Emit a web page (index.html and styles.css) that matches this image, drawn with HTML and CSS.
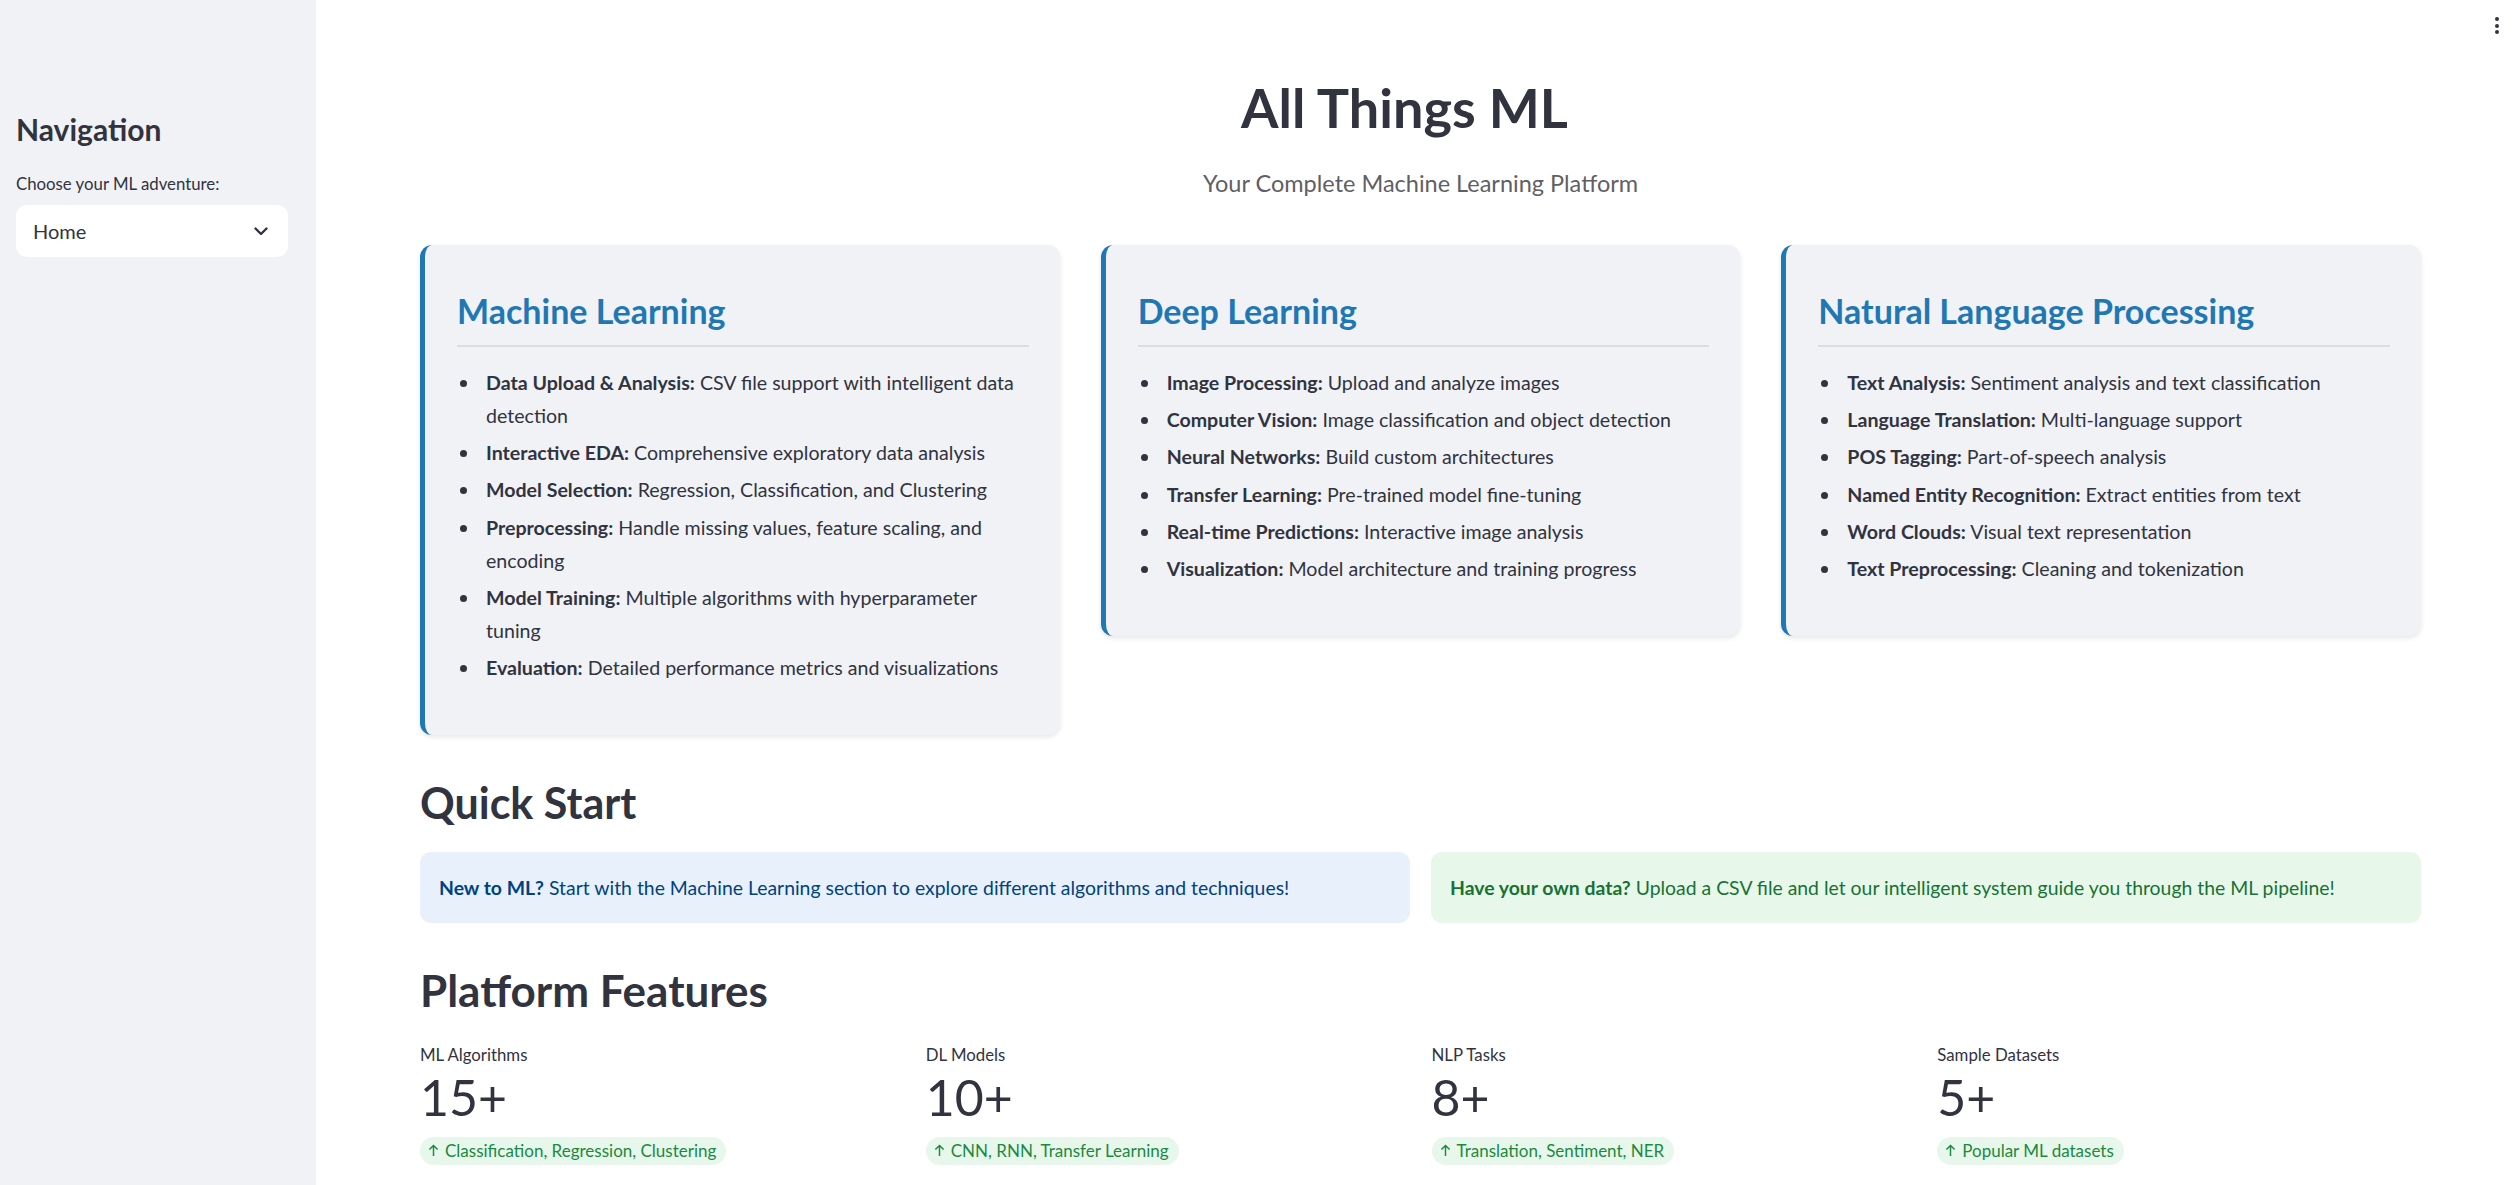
FILE: index.html
```html
<!DOCTYPE html>
<html lang="en">
<head>
<meta charset="utf-8">
<title>All Things ML</title>
<link rel="stylesheet" href="styles.css">
</head>
<body>
<div class="app">
  <aside class="sidebar">
    <h2 class="side-title">Navigation</h2>
    <div class="select-label">Choose your ML adventure:</div>
    <div class="select">
      <span>Home</span>
      <svg class="chevron" width="14" height="9" viewBox="0 0 14 9"><path d="M1.5 1.5 L7 7 L12.5 1.5" fill="none" stroke="#31333f" stroke-width="2.4" stroke-linecap="round" stroke-linejoin="round"/></svg>
    </div>
  </aside>
  <main class="main">
    <div class="menu-dots"><i></i><i></i><i></i></div>
    <div class="content">
      <h1 class="title">All Things ML</h1>
      <p class="subtitle">Your Complete Machine Learning Platform</p>

      <div class="cards">
        <div class="card">
          <h3 class="card-title">Machine Learning</h3>
          <ul class="card-list">
            <li><span><b>Data Upload &amp; Analysis:</b> CSV file support with intelligent data detection</span></li>
            <li><span><b>Interactive EDA:</b> Comprehensive exploratory data analysis</span></li>
            <li><span><b>Model Selection:</b> Regression, Classification, and Clustering</span></li>
            <li><span><b>Preprocessing:</b> Handle missing values, feature scaling, and encoding</span></li>
            <li><span><b>Model Training:</b> Multiple algorithms with hyperparameter tuning</span></li>
            <li><span><b>Evaluation:</b> Detailed performance metrics and visualizations</span></li>
          </ul>
        </div>
        <div class="card">
          <h3 class="card-title">Deep Learning</h3>
          <ul class="card-list">
            <li><span><b>Image Processing:</b> Upload and analyze images</span></li>
            <li><span><b>Computer Vision:</b> Image classification and object detection</span></li>
            <li><span><b>Neural Networks:</b> Build custom architectures</span></li>
            <li><span><b>Transfer Learning:</b> Pre-trained model fine-tuning</span></li>
            <li><span><b>Real-time Predictions:</b> Interactive image analysis</span></li>
            <li><span><b>Visualization:</b> Model architecture and training progress</span></li>
          </ul>
        </div>
        <div class="card">
          <h3 class="card-title">Natural Language Processing</h3>
          <ul class="card-list">
            <li><span><b>Text Analysis:</b> Sentiment analysis and text classification</span></li>
            <li><span><b>Language Translation:</b> Multi-language support</span></li>
            <li><span><b>POS Tagging:</b> Part-of-speech analysis</span></li>
            <li><span><b>Named Entity Recognition:</b> Extract entities from text</span></li>
            <li><span><b>Word Clouds:</b> Visual text representation</span></li>
            <li><span><b>Text Preprocessing:</b> Cleaning and tokenization</span></li>
          </ul>
        </div>
      </div>

      <h2 class="section section-qs">Quick Start</h2>
      <div class="alerts">
        <div class="alert info"><b>New to ML?</b> Start with the Machine Learning section to explore different algorithms and techniques!</div>
        <div class="alert success"><b>Have your own data?</b> Upload a CSV file and let our intelligent system guide you through the ML pipeline!</div>
      </div>

      <h2 class="section section-pf">Platform Features</h2>
      <div class="metrics">
        <div class="metric">
          <div class="metric-label">ML Algorithms</div>
          <div class="metric-value">15+</div>
          <div class="delta"><svg class="arrow" width="11" height="13" viewBox="0 0 12 14"><path d="M6 13 V1.8 M1.5 6 L6 1.5 L10.5 6" fill="none" stroke="currentColor" stroke-width="1.6"/></svg>Classification, Regression, Clustering</div>
        </div>
        <div class="metric">
          <div class="metric-label">DL Models</div>
          <div class="metric-value">10+</div>
          <div class="delta"><svg class="arrow" width="11" height="13" viewBox="0 0 12 14"><path d="M6 13 V1.8 M1.5 6 L6 1.5 L10.5 6" fill="none" stroke="currentColor" stroke-width="1.6"/></svg>CNN, RNN, Transfer Learning</div>
        </div>
        <div class="metric">
          <div class="metric-label">NLP Tasks</div>
          <div class="metric-value">8+</div>
          <div class="delta"><svg class="arrow" width="11" height="13" viewBox="0 0 12 14"><path d="M6 13 V1.8 M1.5 6 L6 1.5 L10.5 6" fill="none" stroke="currentColor" stroke-width="1.6"/></svg>Translation, Sentiment, NER</div>
        </div>
        <div class="metric">
          <div class="metric-label">Sample Datasets</div>
          <div class="metric-value">5+</div>
          <div class="delta"><svg class="arrow" width="11" height="13" viewBox="0 0 12 14"><path d="M6 13 V1.8 M1.5 6 L6 1.5 L10.5 6" fill="none" stroke="currentColor" stroke-width="1.6"/></svg>Popular ML datasets</div>
        </div>
      </div>
    </div>
  </main>
</div>
</body>
</html>
```

FILE: styles.css
```css
* { box-sizing: border-box; }
html, body {
  margin: 0;
  padding: 0;
  height: 100%;
  overflow: hidden;
  background: #ffffff;
  font-family: "Lato", "Noto Sans", "Liberation Sans", sans-serif;
  color: #31333f;
}
.app {
  display: flex;
  height: 1185px;
}
.sidebar {
  width: 316px;
  flex: none;
  background: #f0f2f6;
  padding: 111px 28px 0 16px;
}
.side-title {
  margin: 0;
  font-size: 30px;
  line-height: 36px;
  font-weight: 700;
  color: #31333f;
}
.select-label {
  margin-top: 23px;
  font-size: 16.8px;
  line-height: 28px;
  color: #31333f;
}
.select {
  margin-top: 7px;
  height: 52px;
  background: #ffffff;
  border-radius: 11px;
  display: flex;
  align-items: center;
  justify-content: space-between;
  padding: 0 20px 0 17px;
  font-size: 20px;
  color: #31333f;
}
.chevron { display: block; }

.main {
  flex: 1;
  position: relative;
  padding: 0 91px 0 104px;
}
.menu-dots {
  position: absolute;
  top: 17px;
  right: 13px;
  display: flex;
  flex-direction: column;
  gap: 2.4px;
}
.menu-dots i {
  display: block;
  width: 4.2px;
  height: 4.2px;
  border-radius: 50%;
  background: #31333f;
}
.content { width: 2001px; }

.title {
  margin: 76px 0 0;
  padding-right: 32px;
  text-align: center;
  font-size: 54px;
  line-height: 1.2;
  font-weight: 700;
  color: #31333f;
}
.subtitle {
  margin: 27px 0 0;
  text-align: center;
  font-size: 23.5px;
  line-height: 30px;
  color: #5f6066;
}

.cards {
  margin-top: 47px;
  display: grid;
  grid-template-columns: repeat(3, 1fr);
  column-gap: 41px;
  align-items: start;
}
.card {
  background: #f0f2f6;
  border-left: 5px solid #1f77b4;
  border-radius: 12px;
  padding: 45px 31px 51px 32px;
  box-shadow: 0 2px 5px rgba(0, 0, 0, 0.10);
}
.card-title {
  margin: 0;
  padding-bottom: 13px;
  border-bottom: 2px solid #dcdde1;
  font-size: 34px;
  line-height: 42px;
  font-weight: 700;
  color: #1f77b4;
}
.card-list {
  list-style: none;
  margin: 19px 0 0;
  padding-left: 29px;
  font-size: 19.6px;
  line-height: 33px;
  color: #31333f;
}
.card-list li {
  position: relative;
  margin-top: 4.3px;
}
.card-list li:first-child { margin-top: 0; }
.card-list li::before {
  content: "";
  position: absolute;
  left: -26px;
  top: 14px;
  width: 7px;
  height: 7px;
  border-radius: 50%;
  background: #31333f;
}
.card-list b { font-weight: 700; }

.section {
  margin: 0;
  font-weight: 700;
  color: #31333f;
}
.section-qs {
  margin-top: 42px;
  font-size: 43px;
  line-height: 52px;
}
.section-pf {
  margin-top: 41px;
  font-size: 44px;
  line-height: 53px;
}

.alerts {
  margin-top: 23px;
  display: grid;
  grid-template-columns: 1fr 1fr;
  column-gap: 21px;
}
.alert {
  border-radius: 11px;
  padding: 19px 19px;
  font-size: 19.4px;
  line-height: 33px;
}
.alert b { font-weight: 700; }
.alert.info {
  background: #e8f1fb;
  color: #004280;
}
.alert.success {
  background: #e7f8eb;
  color: #177233;
}

.metrics {
  margin-top: 25px;
  display: grid;
  grid-template-columns: repeat(4, 1fr);
  column-gap: 22px;
}
.metric-label {
  font-size: 16.8px;
  line-height: 26px;
  color: #31333f;
}
.metric-value {
  font-size: 50px;
  line-height: 58px;
  font-weight: 400;
  color: #31333f;
}
.delta {
  margin-top: 10.5px;
  display: inline-flex;
  align-items: center;
  gap: 6px;
  height: 28px;
  padding: 0 10px 0 8px;
  border-radius: 14px;
  background: #e8f7ec;
  color: #1a8a3f;
  font-size: 17px;
}
.arrow { display: block; flex: none; }
```
